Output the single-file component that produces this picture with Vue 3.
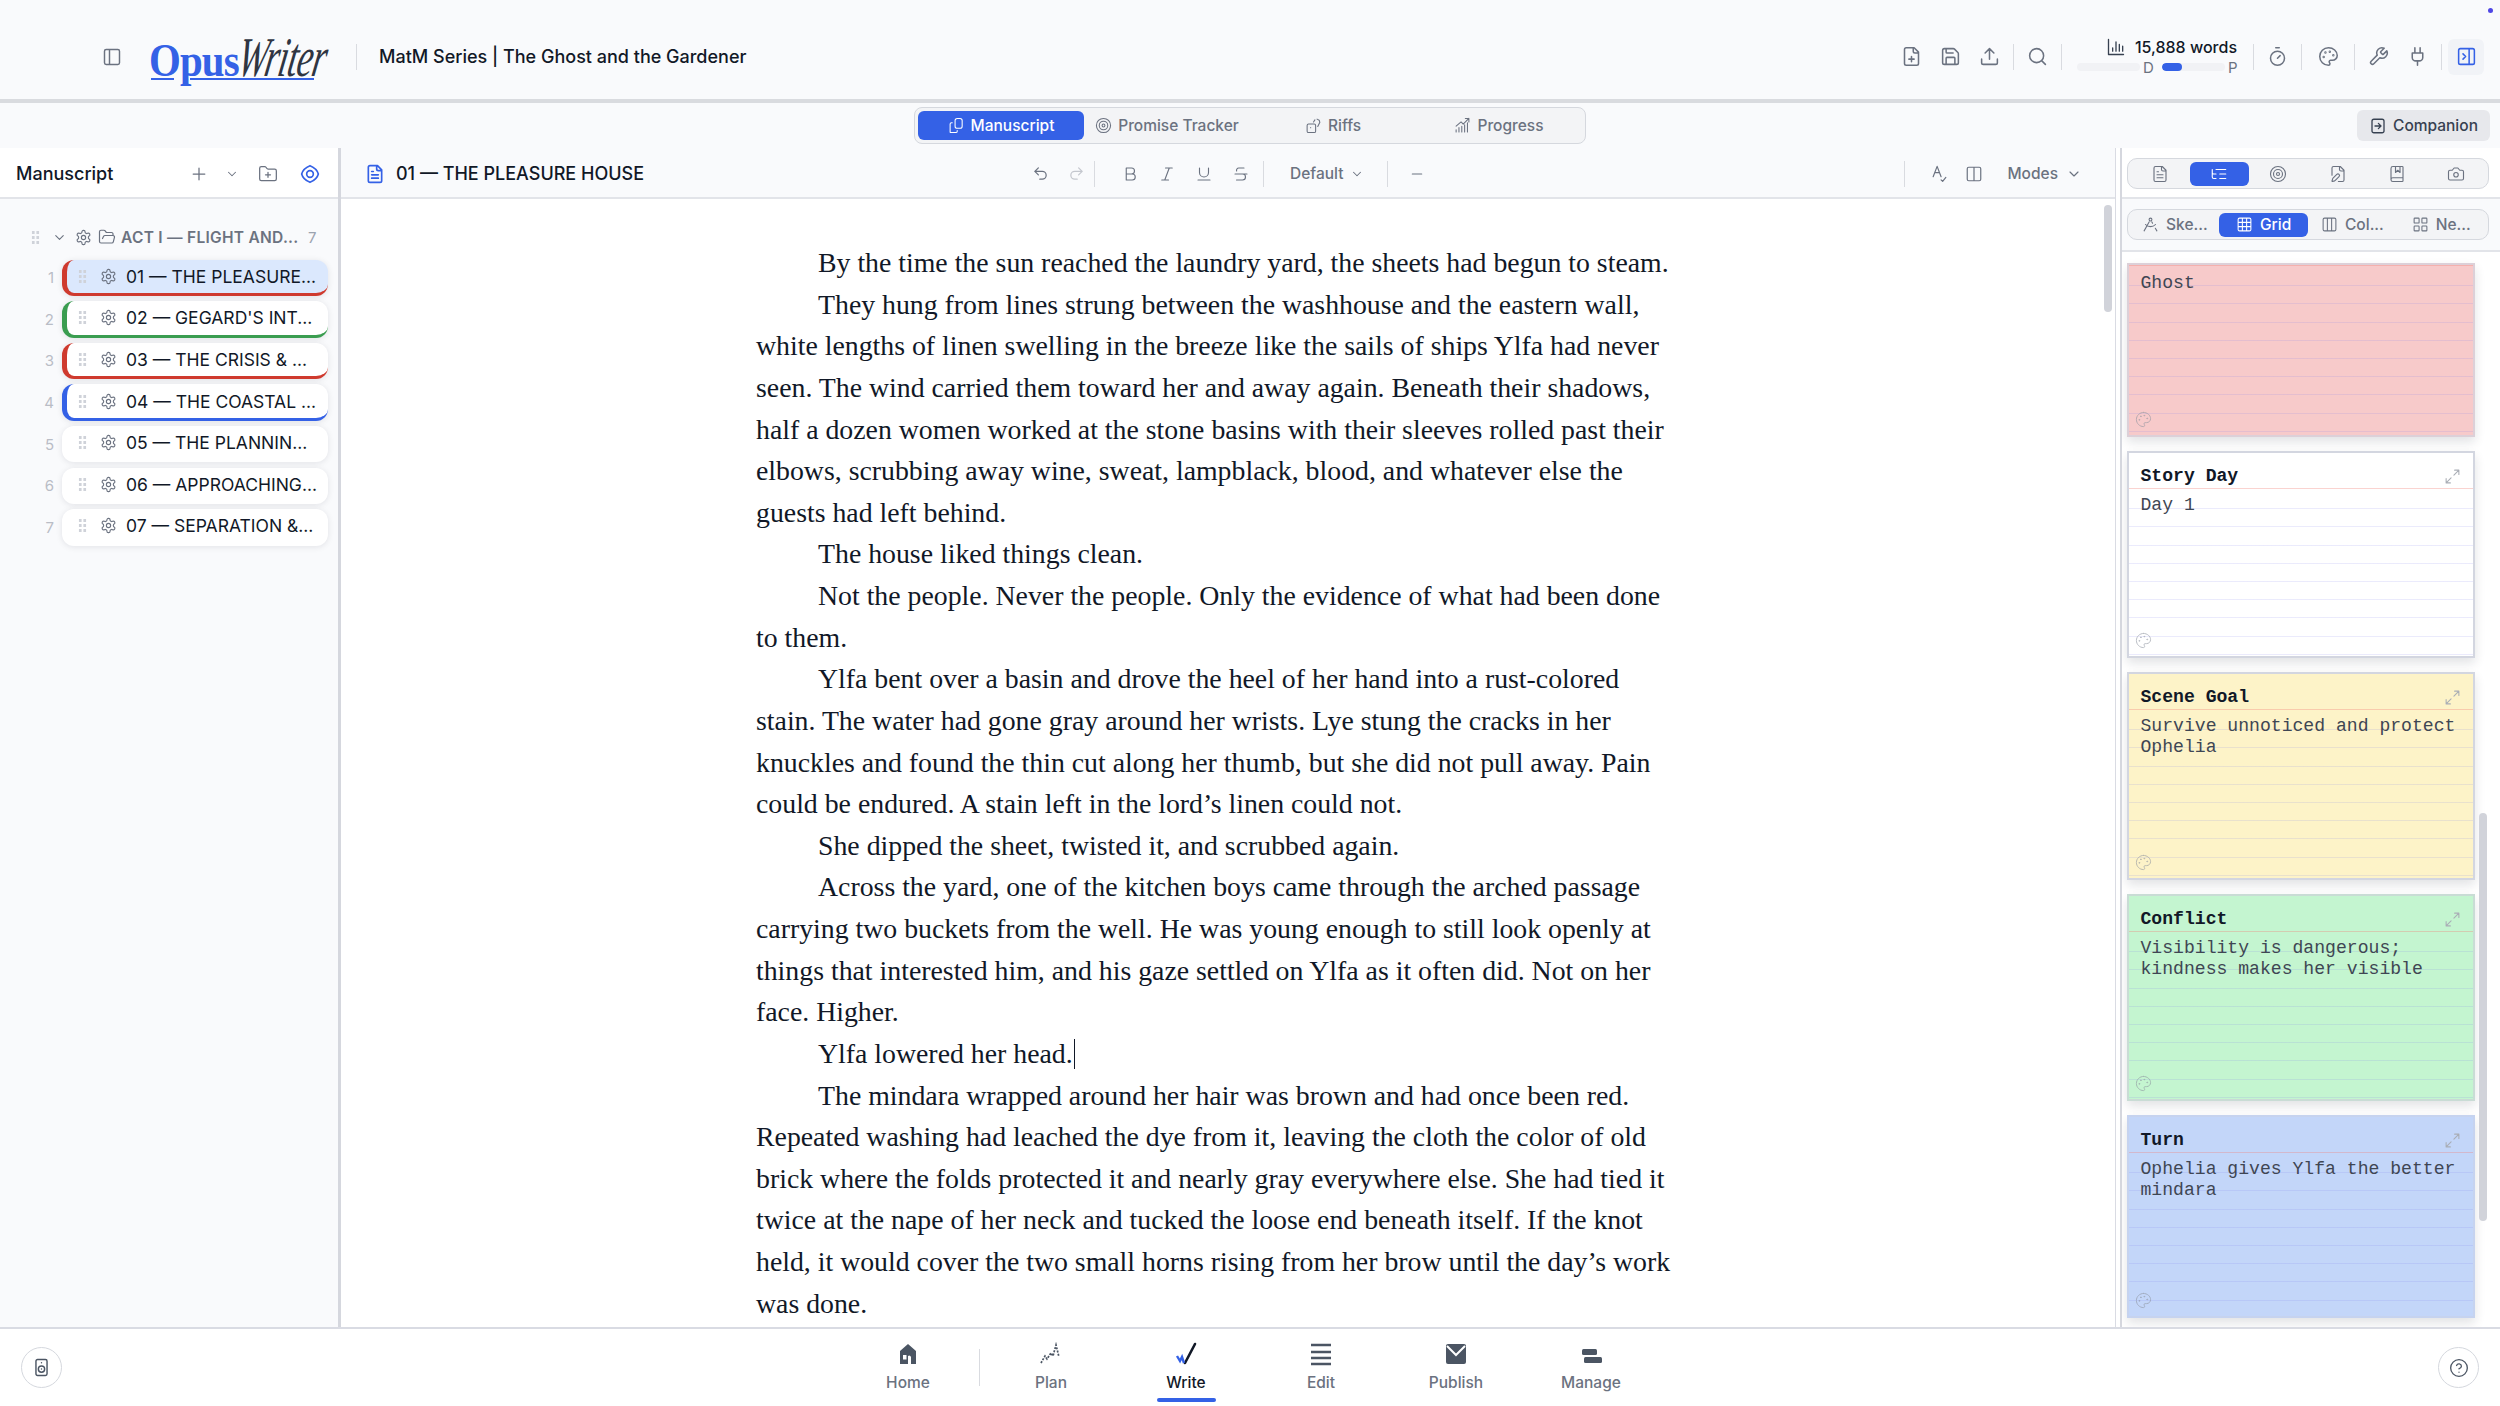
<script setup>
import { h } from "vue";

const rect = (x, y, w, ht, r) =>
  `M${x + r} ${y}h${w - 2 * r}a${r} ${r} 0 0 1 ${r} ${r}v${ht - 2 * r}a${r} ${r} 0 0 1-${r} ${r}h-${w - 2 * r}a${r} ${r} 0 0 1-${r}-${r}v-${ht - 2 * r}a${r} ${r} 0 0 1 ${r}-${r}z`;
const circle = (x, y, r) => `M${x - r} ${y}a${r} ${r} 0 1 0 ${2 * r} 0a${r} ${r} 0 1 0-${2 * r} 0z`;

const icons = {
  panelLeft: rect(3, 3, 18, 18, 2) + "M9 3v18",
  panelRight: rect(3, 3, 18, 18, 2) + "M15 3v18m-7-12 3 3-3 3",
  filePlus: "M15 2H6a2 2 0 0 0-2 2v16a2 2 0 0 0 2 2h12a2 2 0 0 0 2-2V7ZM14 2v4a2 2 0 0 0 2 2h4M9 15h6M12 18v-6",
  save: "M15.2 3a2 2 0 0 1 1.4.6l3.8 3.8a2 2 0 0 1 .6 1.4V19a2 2 0 0 1-2 2H5a2 2 0 0 1-2-2V5a2 2 0 0 1 2-2zM17 21v-7a1 1 0 0 0-1-1H8a1 1 0 0 0-1 1v7M7 3v4a1 1 0 0 0 1 1h7",
  upload: "M21 15v4a2 2 0 0 1-2 2H5a2 2 0 0 1-2-2v-4M17 8l-5-5-5 5M12 3v12",
  search: circle(11, 11, 8) + "M21 21l-4.3-4.3",
  chart: "M3 3v18h18M8 17v-4M12 17V6M16 17V9M20 17v-6",
  timer: "M10 2h4M12 14l3-3" + circle(12, 14, 8),
  palette:
    circle(13.5, 6.5, 0.5) + circle(17.5, 10.5, 0.5) + circle(8.5, 7.5, 0.5) + circle(6.5, 12.5, 0.5) +
    "M12 2C6.5 2 2 6.5 2 12s4.5 10 10 10c.926 0 1.648-.746 1.648-1.688 0-.437-.18-.835-.437-1.125-.29-.289-.438-.652-.438-1.125a1.64 1.64 0 0 1 1.668-1.668h1.996c3.051 0 5.555-2.503 5.555-5.554C21.965 6.012 17.461 2 12 2z",
  wrench: "M14.7 6.3a1 1 0 0 0 0 1.4l1.6 1.6a1 1 0 0 0 1.4 0l3.77-3.77a6 6 0 0 1-7.94 7.94l-6.91 6.91a2.12 2.12 0 0 1-3-3l6.91-6.91a6 6 0 0 1 7.94-7.94l-3.76 3.76z",
  plug: "M12 22v-5M9 8V2M15 8V2M18 8v5a4 4 0 0 1-4 4h-4a4 4 0 0 1-4-4V8Z",
  fileText: "M15 2H6a2 2 0 0 0-2 2v16a2 2 0 0 0 2 2h12a2 2 0 0 0 2-2V7ZM14 2v4a2 2 0 0 0 2 2h4M16 13H8M16 17H8M10 9H8",
  plus: "M5 12h14M12 5v14",
  chevron: "m6 9 6 6 6-6",
  folderPlus: "M12 10v6M9 13h6M20 20a2 2 0 0 0 2-2V8a2 2 0 0 0-2-2h-7.9a2 2 0 0 1-1.69-.9L9.6 3.9A2 2 0 0 0 7.93 3H4a2 2 0 0 0-2 2v13a2 2 0 0 0 2 2Z",
  eye: "M12 2c5 2 9 6 10 10-1 4-5 8-10 10-5-2-9-6-10-10 1-4 5-8 10-10z" + circle(12, 12, 4),
  undo: "M9 14 4 9l5-5M4 9h10.5a5.5 5.5 0 0 1 0 11H11",
  redo: "m15 14 5-5-5-5M20 9H9.5a5.5 5.5 0 0 0 0 11H13",
  bold: "M14 12a4 4 0 0 0 0-8H7v8M15 20a4 4 0 0 0 0-8H7v8Z",
  italic: "M19 4h-9M14 20H5M15 4 9 20",
  underline: "M6 4v6a6 6 0 0 0 12 0V4M4 20h16",
  strike: "M16 4H9a3 3 0 0 0-2.83 4M14 12a4 4 0 0 1 0 8H6M4 12h16",
  minus: "M5 12h14",
  spell: "M4 16 9 3l5 13M6 11h6M14 20l2 2 4-5",
  columns: rect(3, 3, 18, 18, 2) + "M12 3v18",
  target: circle(12, 12, 10) + circle(12, 12, 6) + circle(12, 12, 2),
  listTree: "M21 12h-8M21 6H8M21 18h-8M3 6v4c0 1.1.9 2 2 2h3M3 10v6c0 1.1.9 2 2 2h3",
  filePen:
    "M12.5 22H18a2 2 0 0 0 2-2V7l-5-5H6a2 2 0 0 0-2 2v9.5M14 2v4a2 2 0 0 0 2 2h4M13.378 15.626a1 1 0 1 0-3.004-3.004l-5.01 5.012a2 2 0 0 0-.506.854l-.837 2.87a.5.5 0 0 0 .62.62l2.87-.837a2 2 0 0 0 .854-.506z",
  book: "M10 2v8l3-3 3 3V2M4 19.5v-15A2.5 2.5 0 0 1 6.5 2H19a1 1 0 0 1 1 1v18a1 1 0 0 1-1 1H6.5a1 1 0 0 1 0-5H20",
  camera: "M14.5 4h-5L7 7H4a2 2 0 0 0-2 2v9a2 2 0 0 0 2 2h16a2 2 0 0 0 2-2V9a2 2 0 0 0-2-2h-3l-2.5-3z" + circle(12, 13, 3),
  compass: "m13 6.7 1.9 3.5M19.1 12a10 10 0 0 1-14.2 0M21 21l-2.2-3.8M3 21l8-14.3" + circle(12, 5, 2),
  grid: rect(3, 3, 18, 18, 2) + "M3 9h18M3 15h18M9 3v18M15 3v18",
  cols3: rect(3, 3, 18, 18, 2) + "M9 3v18M15 3v18",
  layout: rect(3, 3, 7, 7, 1) + rect(14, 3, 7, 7, 1) + rect(14, 14, 7, 7, 1) + rect(3, 14, 7, 7, 1),
  expand: "M15 3h6v6M21 3l-7 7M3 21l7-7M9 21H3v-6",
  gear:
    "M12.22 2h-.44a2 2 0 0 0-2 2v.18a2 2 0 0 1-1 1.73l-.43.25a2 2 0 0 1-2 0l-.15-.08a2 2 0 0 0-2.73.73l-.22.38a2 2 0 0 0 .73 2.73l.15.1a2 2 0 0 1 1 1.72v.51a2 2 0 0 1-1 1.74l-.15.09a2 2 0 0 0-.73 2.73l.22.38a2 2 0 0 0 2.73.73l.15-.08a2 2 0 0 1 2 0l.43.25a2 2 0 0 1 1 1.73V20a2 2 0 0 0 2 2h.44a2 2 0 0 0 2-2v-.18a2 2 0 0 1 1-1.73l.43-.25a2 2 0 0 1 2 0l.15.08a2 2 0 0 0 2.73-.73l.22-.39a2 2 0 0 0-.73-2.73l-.15-.08a2 2 0 0 1-1-1.74v-.5a2 2 0 0 1 1-1.74l.15-.09a2 2 0 0 0 .73-2.73l-.22-.38a2 2 0 0 0-2.73-.73l-.15.08a2 2 0 0 1-2 0l-.43-.25a2 2 0 0 1-1-1.73V4a2 2 0 0 0-2-2z" +
    circle(12, 12, 3),
  folderOpen:
    "m6 14 1.5-2.9A2 2 0 0 1 9.24 10H20a2 2 0 0 1 1.94 2.5l-1.54 6a2 2 0 0 1-1.95 1.5H4a2 2 0 0 1-2-2V5a2 2 0 0 1 2-2h3.9a2 2 0 0 1 1.69.9l.81 1.2a2 2 0 0 0 1.69.9H18a2 2 0 0 1 2 2v2",
  boxArrow: rect(4, 3, 16, 18, 2.5) + "M8 12h8m-3.5-3.5L16 12l-3.5 3.5",
  papers: "M6 8H5a2 2 0 0 0-2 2v11a1 1 0 0 0 1 1h7a2 2 0 0 0 2-2v-1" + rect(10, 2, 10, 14, 3),
  dice: rect(3, 10, 12, 12, 2) + "M8 15h.01M17 3l3 1.5 1 3-3 6M12 7l2-3",
  growth: "M3 21v-3M7 21v-6M11 21v-8M15 21v-10M19 21V8M3 13 10 7l3 3 8-8M16 2h5v5",
  speaker: rect(5, 2, 14, 20, 2) + circle(12, 14, 4) + "M12 6h.01M12 14h.01",
  help: circle(12, 12, 10) + "M9.1 9a3 3 0 0 1 5.8 1c0 2-3 3-3 3M12 17h.01",
};

const Icon = (props) =>
  h(
    "svg",
    {
      viewBox: "0 0 24 24",
      width: props.size || 21,
      height: props.size || 21,
      fill: "none",
      stroke: "currentColor",
      "stroke-width": props.sw || 1.75,
      "stroke-linecap": "round",
      "stroke-linejoin": "round",
    },
    [h("path", { d: icons[props.name] })]
  );

const chapters = [
  { n: 1, title: "01 — THE PLEASURE...", color: "#cf3a2e", active: true },
  { n: 2, title: "02 — GEGARD'S INT...", color: "#3a9d50" },
  { n: 3, title: "03 — THE CRISIS & ...", color: "#cf3a2e" },
  { n: 4, title: "04 — THE COASTAL ...", color: "#3461e6" },
  { n: 5, title: "05 — THE PLANNIN..." },
  { n: 6, title: "06 — APPROACHING..." },
  { n: 7, title: "07 — SEPARATION &..." },
];

const tabs = [
  { label: "Manuscript", icon: "papers", active: true },
  { label: "Promise Tracker", icon: "target" },
  { label: "Riffs", icon: "dice" },
  { label: "Progress", icon: "growth" },
];

const panelIcons = ["fileText", "listTree", "target", "filePen", "book", "camera"];

const views = [
  { label: "Ske...", icon: "compass" },
  { label: "Grid", icon: "grid", active: true },
  { label: "Col...", icon: "cols3" },
  { label: "Ne...", icon: "layout" },
];

const cards = [
  { body: "Ghost", cls: "red", height: 174 },
  { title: "Story Day", body: "Day 1", cls: "white", height: 207 },
  { title: "Scene Goal", body: "Survive unnoticed and protect Ophelia", cls: "yellow", height: 208 },
  { title: "Conflict", body: "Visibility is dangerous; kindness makes her visible", cls: "green", height: 207 },
  { title: "Turn", body: "Ophelia gives Ylfa the better mindara", cls: "blue", height: 203 },
];

const paragraphs = [
  "By the time the sun reached the laundry yard, the sheets had begun to steam.",
  "They hung from lines strung between the washhouse and the eastern wall, white lengths of linen swelling in the breeze like the sails of ships Ylfa had never seen. The wind carried them toward her and away again. Beneath their shadows, half a dozen women worked at the stone basins with their sleeves rolled past their elbows, scrubbing away wine, sweat, lampblack, blood, and whatever else the guests had left behind.",
  "The house liked things clean.",
  "Not the people. Never the people. Only the evidence of what had been done to them.",
  "Ylfa bent over a basin and drove the heel of her hand into a rust-colored stain. The water had gone gray around her wrists. Lye stung the cracks in her knuckles and found the thin cut along her thumb, but she did not pull away. Pain could be endured. A stain left in the lord’s linen could not.",
  "She dipped the sheet, twisted it, and scrubbed again.",
  "Across the yard, one of the kitchen boys came through the arched passage carrying two buckets from the well. He was young enough to still look openly at things that interested him, and his gaze settled on Ylfa as it often did. Not on her face. Higher.",
];
const lastParagraph =
  "The mindara wrapped around her hair was brown and had once been red. Repeated washing had leached the dye from it, leaving the cloth the color of old brick where the folds protected it and nearly gray everywhere else. She had tied it twice at the nape of her neck and tucked the loose end beneath itself. If the knot held, it would cover the two small horns rising from her brow until the day’s work was done.";

const navItems = ["Plan", "Write", "Edit", "Publish", "Manage"];
</script>

<template>
  <div class="app">
    <span class="status-dot"></span>

    <header class="topbar">
      <div class="top-left">
        <button class="icon-btn side-toggle"><Icon name="panelLeft" :size="20" /></button>
        <div class="logo">
          <span class="logo-opus">Opus</span><span class="logo-writer">Writer</span>
          <span class="logo-line"></span>
        </div>
        <span class="sep logo-sep"></span>
        <span class="doc-title">MatM Series | The Ghost and the Gardener</span>
      </div>
      <div class="top-right">
        <button class="icon-btn"><Icon name="filePlus" /></button>
        <button class="icon-btn"><Icon name="save" /></button>
        <button class="icon-btn"><Icon name="upload" /></button>
        <span class="sep"></span>
        <button class="icon-btn"><Icon name="search" /></button>
        <span class="sep"></span>
        <div class="stats">
          <div class="stats-top"><Icon name="chart" :size="20" :sw="1.6" class="dark" /><span>15,888 words</span></div>
          <div class="stats-bars">
            <span class="track"></span><span class="letter">D</span>
            <span class="track"><i class="fill"></i></span><span class="letter">P</span>
          </div>
        </div>
        <span class="sep after-stats"></span>
        <button class="icon-btn"><Icon name="timer" /></button>
        <span class="sep"></span>
        <button class="icon-btn wide"><Icon name="palette" /></button>
        <span class="sep"></span>
        <button class="icon-btn"><Icon name="wrench" /></button>
        <button class="icon-btn"><Icon name="plug" /></button>
        <span class="sep"></span>
        <button class="panel-btn"><Icon name="panelRight" :size="21" /></button>
      </div>
    </header>

    <div class="subbar">
      <div></div>
      <div class="tabs">
        <div v-for="t in tabs" :key="t.label" class="tab" :class="{ on: t.active }">
          <Icon :name="t.icon" :size="17" :sw="1.5" /><span>{{ t.label }}</span>
        </div>
      </div>
      <div class="subbar-right">
        <button class="companion"><Icon name="boxArrow" :size="18" /><span>Companion</span></button>
      </div>
    </div>

    <main class="main">
      <aside class="left">
        <div class="left-head">
          <span class="left-title">Manuscript</span>
          <div class="left-tools">
            <Icon name="plus" :size="20" :sw="1.5" class="t-plus" />
            <Icon name="chevron" :size="14" class="t-chev" />
            <Icon name="folderPlus" :size="20" :sw="1.5" class="t-folder" />
            <Icon name="eye" :size="20" :sw="2" class="t-eye" />
          </div>
        </div>
        <div class="tree">
          <div class="group">
            <span class="dots"></span>
            <Icon name="chevron" :size="15" class="chev" />
            <Icon name="gear" :size="17" :sw="1.6" />
            <Icon name="folderOpen" :size="18" :sw="1.6" class="folder" />
            <span class="group-name">ACT I — FLIGHT AND...</span>
            <span class="group-count">7</span>
          </div>
          <div v-for="c in chapters" :key="c.n" class="row">
            <span class="row-num">{{ c.n }}</span>
            <div class="item" :class="{ on: c.active }" :style="c.color ? { borderColor: c.color } : null">
              <span class="dots"></span>
              <Icon name="gear" :size="17" :sw="1.6" class="gear" />
              <span class="item-title">{{ c.title }}</span>
            </div>
          </div>
        </div>
      </aside>

      <section class="editor">
        <div class="editor-head">
          <div class="editor-title">
            <Icon name="fileText" :size="20" :sw="2" class="blue" />
            <span>01 — THE PLEASURE HOUSE</span>
          </div>
          <div class="tools">
            <Icon name="undo" :size="17" class="tool" />
            <Icon name="redo" :size="17" class="tool faint" />
            <span class="sep first-sep"></span>
            <Icon name="bold" :size="18" :sw="1.5" class="tool" />
            <Icon name="italic" :size="18" :sw="1.5" class="tool" />
            <Icon name="underline" :size="18" :sw="1.5" class="tool" />
            <Icon name="strike" :size="18" :sw="1.5" class="tool" />
            <span class="sep"></span>
            <span class="default">Default</span>
            <Icon name="chevron" :size="14" class="default-chev" />
            <span class="sep"></span>
            <Icon name="minus" :size="16" class="tool minus" />
          </div>
          <div class="tools-right">
            <span class="sep"></span>
            <Icon name="spell" :size="19" :sw="1.5" class="spell" />
            <Icon name="columns" :size="18" :sw="1.6" class="cols" />
            <span class="modes">Modes</span>
            <Icon name="chevron" :size="16" class="modes-chev" />
          </div>
        </div>
        <div class="editor-body">
          <article class="page">
            <p v-for="(p, i) in paragraphs" :key="i">{{ p }}</p>
            <p>Ylfa lowered her head.<span class="caret"></span></p>
            <p>{{ lastParagraph }}</p>
          </article>
          <span class="editor-scroll"></span>
        </div>
      </section>

      <aside class="right">
        <div class="right-inner">
          <div class="right-head">
            <div class="seg">
              <div v-for="(name, i) in panelIcons" :key="name" class="seg-cell" :class="{ on: i === 1 }">
                <Icon :name="name" :size="18" :sw="1.5" />
              </div>
            </div>
          </div>
          <div class="view-row">
            <div class="views">
              <div v-for="v in views" :key="v.label" class="view" :class="{ on: v.active }">
                <Icon :name="v.icon" :size="17" :sw="1.5" /><span>{{ v.label }}</span>
              </div>
            </div>
          </div>
          <div class="cards">
            <div
              v-for="c in cards"
              :key="c.body"
              class="card"
              :class="[c.cls, { plain: !c.title }]"
              :style="{ height: c.height + 'px' }"
            >
              <div v-if="c.title" class="card-head">
                <span>{{ c.title }}</span>
                <Icon name="expand" :size="17" :sw="1.5" class="expand" />
              </div>
              <div class="card-body">{{ c.body }}</div>
              <Icon name="palette" :size="17" :sw="1.4" class="card-palette" />
            </div>
            <span class="cards-scroll"></span>
          </div>
        </div>
      </aside>
    </main>

    <footer class="bottom">
      <div class="bottom-side">
        <button class="round"><Icon name="speaker" :size="19" :sw="1.8" /></button>
      </div>
      <nav class="nav">
        <div class="nav-item">
          <svg width="24" height="24" viewBox="0 0 24 24" class="nav-icon">
            <path d="M12 2 20 9v13h-5v-7a2 2 0 0 0-3-1v8H4V9z" fill="#4b5563" />
            <path d="M7 13h3.5v4.5H7z" fill="#fff" />
          </svg>
          <span>Home</span>
        </div>
        <span class="nav-sep"></span>
        <div v-for="n in navItems" :key="n" class="nav-item" :class="{ on: n === 'Write' }">
          <svg v-if="n === 'Plan'" width="24" height="24" viewBox="0 0 24 24" class="nav-icon">
            <path d="M2 21 6 14 8 17 12 11 14 14 17 3 20 15" fill="none" stroke="#4b5563" stroke-width="1.7" stroke-dasharray="2 1.3" />
          </svg>
          <svg v-else-if="n === 'Write'" width="24" height="24" viewBox="0 0 24 24" class="nav-icon">
            <path d="M11 21 21 2" fill="none" stroke="#111827" stroke-width="2.6" stroke-linecap="round" />
            <path d="M3 14 6 19 8 15 10 21" fill="none" stroke="#3461e6" stroke-width="2.4" />
          </svg>
          <svg v-else-if="n === 'Edit'" width="24" height="24" viewBox="0 0 24 24" class="nav-icon">
            <path d="M2 3h20M2 10h20M2 16h20M2 22h20" fill="none" stroke="#4b5563" stroke-width="2.6" />
          </svg>
          <svg v-else-if="n === 'Publish'" width="24" height="24" viewBox="0 0 24 24" class="nav-icon">
            <rect x="2" y="2" width="20" height="20" rx="2" fill="#4b5563" />
            <path d="M3 4 12 13 21 4" fill="none" stroke="#fff" stroke-width="2" />
          </svg>
          <svg v-else width="24" height="24" viewBox="0 0 24 24" class="nav-icon">
            <rect x="3" y="7" width="15" height="6" rx="1.5" fill="#4b5563" />
            <rect x="5" y="15" width="18" height="6" rx="1.5" fill="#4b5563" />
          </svg>
          <span>{{ n }}</span>
        </div>
      </nav>
      <div class="bottom-side end">
        <button class="round"><Icon name="help" :size="20" :sw="1.6" /></button>
      </div>
    </footer>
  </div>
</template>

<style>
html,
body {
  margin: 0;
  background: #fff;
}
</style>

<style scoped>
.app {
  position: relative;
  width: 2500px;
  height: 1406px;
  display: flex;
  flex-direction: column;
  overflow: hidden;
  font-family: Inter, "Liberation Sans", sans-serif;
  color: #111827;
  background: #fff;
}

button {
  border: none;
  background: none;
  padding: 0;
  font: inherit;
  color: inherit;
}

.status-dot {
  position: absolute;
  top: 8px;
  left: 2488px;
  width: 5px;
  height: 5px;
  border-radius: 50%;
  background: #4f46e5;
}

.sep {
  flex: none;
  width: 1px;
  height: 26px;
  margin: 0 4px;
  background: #d9dbe0;
}

.icon-btn {
  flex: none;
  width: 39px;
  height: 36px;
  display: flex;
  align-items: center;
  justify-content: center;
  color: #6b7280;
}

.icon-btn.wide {
  width: 44px;
}

/* top bar */
.topbar {
  flex: none;
  height: 99px;
  box-sizing: content-box;
  border-bottom: 4px solid #d9dbdf;
  background: #f9fafc;
  display: flex;
  justify-content: space-between;
  align-items: center;
  padding: 0 16px 0 0;
}

.top-left {
  display: flex;
  align-items: center;
  padding-top: 14px;
}

.top-right {
  display: flex;
  align-items: center;
  padding-top: 14px;
}

.side-toggle {
  margin-left: 92px;
}

.logo {
  position: relative;
  display: flex;
  align-items: baseline;
  margin-left: 18px;
  width: 181px;
  height: 44px;
  line-height: 44px;
}

.logo-opus {
  font-family: "Liberation Serif", serif;
  font-weight: 700;
  font-size: 47px;
  color: #3461e6;
  display: inline-block;
  transform: scaleX(0.87);
  transform-origin: left;
  letter-spacing: -1px;
}

.logo-writer {
  font-family: "Liberation Serif", serif;
  font-style: italic;
  font-size: 56px;
  color: #2f3542;
  display: inline-block;
  margin-left: -17px;
  transform: skewX(-10deg) scaleX(0.64);
  transform-origin: left bottom;
  letter-spacing: -1px;
}

.logo-line {
  position: absolute;
  left: 2px;
  top: 43px;
  width: 163px;
  height: 2px;
  background: linear-gradient(to right, #3461e6 23px, transparent 23px, transparent 39px, #3461e6 39px);
}

.logo-sep {
  margin: 0 22px 0 26px;
}

.doc-title {
  font-size: 18px;
  font-weight: 500;
}

.stats {
  width: 160px;
  margin-left: 11px;
  margin-right: 12px;
}

.stats-top {
  display: flex;
  align-items: center;
  justify-content: flex-end;
  gap: 9px;
  font-size: 16px;
  font-weight: 500;
}

.stats-bars {
  display: flex;
  align-items: center;
  margin-top: 1px;
  font-size: 15px;
  color: #6b7280;
}

.track {
  flex: none;
  width: 63px;
  height: 8px;
  border-radius: 4px;
  background: #f1f2f5;
  overflow: hidden;
}

.fill {
  display: block;
  width: 20px;
  height: 100%;
  border-radius: 4px;
  background: #3461e6;
}

.letter {
  flex: none;
  width: 22px;
  box-sizing: border-box;
  padding-left: 3px;
}

.dark {
  color: #374151;
}

.panel-btn {
  width: 36px;
  height: 36px;
  margin-left: 2px;
  border-radius: 6px;
  background: #f1f3f7;
  color: #3461e6;
  display: flex;
  align-items: center;
  justify-content: center;
}

/* tabs */
.subbar {
  flex: none;
  height: 45px;
  background: #f9fafc;
  display: grid;
  grid-template-columns: 1fr auto 1fr;
  align-items: center;
}

.tabs {
  display: grid;
  grid-template-columns: repeat(4, 166px);
  padding: 3px;
  height: 29px;
  border: 1px solid #d5d8de;
  border-radius: 8px;
  background: #f3f4f6;
  box-sizing: content-box;
}

.tab {
  display: flex;
  align-items: center;
  justify-content: center;
  gap: 6px;
  font-size: 15.5px;
  font-weight: 500;
  color: #6b7280;
  border-radius: 6px;
}

.tab.on {
  background: #3461e6;
  color: #fff;
}

.subbar-right {
  display: flex;
  justify-content: flex-end;
  padding-right: 10px;
}

.companion {
  display: flex;
  align-items: center;
  gap: 6px;
  width: 133px;
  height: 31px;
  justify-content: center;
  border-radius: 6px;
  background: #e7e8ec;
  color: #374151;
  font-size: 15.5px;
  font-weight: 500;
}

/* main */
.main {
  flex: 1;
  min-height: 0;
  display: flex;
  border-bottom: 2px solid #d9dbe3;
}

.left {
  flex: none;
  width: 341px;
  display: flex;
  flex-direction: column;
  border-right: 3px solid #d5d7de;
  box-sizing: border-box;
}

.left-head {
  flex: none;
  height: 51px;
  background: #fff;
  border-bottom: 2px solid #e2e4e9;
  box-sizing: border-box;
  display: flex;
  align-items: center;
  justify-content: space-between;
  padding: 2px 0 0 16px;
}

.left-title {
  font-size: 18px;
  font-weight: 500;
}

.left-tools {
  position: relative;
  display: flex;
  align-items: center;
  color: #6b7280;
  padding-right: 18px;
}

.t-chev {
  margin: 0 0 0 16px;
}

.t-folder {
  margin-left: 19px;
}

.t-eye {
  margin-left: 22px;
  color: #3461e6;
}

.tree {
  flex: 1;
  background: #f9fafc;
  padding-top: 20px;
}

.dots {
  flex: none;
  width: 9px;
  height: 15px;
  background: radial-gradient(circle, #cfd2d9 1.5px, transparent 1.8px) 0 0 / 4.5px 5px;
}

.group {
  display: flex;
  align-items: center;
  height: 36px;
  padding-left: 31px;
  margin-bottom: 2px;
  color: #6b7280;
}

.chev {
  margin: 0 8px 0 12px;
}

.folder {
  margin-left: 6px;
}

.group-name {
  margin-left: 5px;
  width: 187px;
  font-size: 15.5px;
  font-weight: 600;
  letter-spacing: 0.28px;
  white-space: nowrap;
}

.group-count {
  font-size: 15px;
  color: #9ca3af;
}

.row {
  display: flex;
  align-items: center;
  height: 41.6px;
}

.row-num {
  width: 54px;
  flex: none;
  text-align: right;
  font-size: 15px;
  color: #b9bdc6;
}

.item {
  margin-left: 8px;
  width: 266px;
  height: 36.5px;
  box-sizing: border-box;
  border: 0 solid transparent;
  border-left-width: 5px;
  border-bottom-width: 3px;
  border-radius: 12px;
  background: #fff;
  box-shadow: 0 1px 6px rgba(17, 24, 39, 0.1);
  display: flex;
  align-items: center;
  padding-left: 11px;
}

.item.on {
  background: #dbe8fd;
}

.gear {
  margin-left: 13px;
  color: #6b7280;
}

.item-title {
  margin-left: 9px;
  font-size: 17.5px;
  white-space: nowrap;
}

/* editor */
.editor {
  flex: 1;
  min-width: 0;
  display: flex;
  flex-direction: column;
}

.editor-head {
  flex: none;
  height: 51px;
  box-sizing: border-box;
  padding-top: 2px;
  background: #f9fafc;
  border-bottom: 2px solid #e2e4e9;
  display: flex;
  align-items: center;
}

.editor-title {
  width: 681px;
  flex: none;
  display: flex;
  align-items: center;
  gap: 11px;
  padding-left: 24px;
  box-sizing: border-box;
  font-size: 18px;
  font-weight: 500;
}

.blue {
  color: #3461e6;
}

.tools {
  display: flex;
  align-items: center;
  color: #6b7280;
}

.tool {
  margin: 0 9.5px;
}

.first-sep {
  margin: 0 16px 0 0;
}

.faint {
  color: #c4c7ce;
}

.default {
  margin-left: 22px;
  font-size: 15.5px;
  font-weight: 500;
}

.default-chev {
  margin: 0 19px 0 7px;
}

.minus {
  margin-left: 17px;
}

.tools-right {
  margin-left: auto;
  padding-right: 33px;
  display: flex;
  align-items: center;
  color: #6b7280;
}

.spell {
  margin-left: 21px;
}

.cols {
  margin-left: 16px;
}

.modes {
  margin-left: 24px;
  font-size: 15.5px;
  font-weight: 500;
}

.modes-chev {
  margin-left: 8px;
}

.editor-body {
  flex: 1;
  min-height: 0;
  position: relative;
  overflow: hidden;
  background: #fff;
  padding-left: 415px;
}

.page {
  width: 916px;
  padding-top: 43px;
  font-family: "Liberation Serif", serif;
  font-size: 27.8px;
  line-height: 41.62px;
  color: #111827;
}

.page p {
  margin: 0;
  text-indent: 62px;
}

.caret {
  display: inline-block;
  width: 1.5px;
  height: 30px;
  margin-left: 1px;
  vertical-align: -6px;
  background: #111827;
}

.editor-scroll {
  position: absolute;
  left: 1763px;
  top: 6px;
  width: 8px;
  height: 107px;
  border-radius: 4px;
  background: #d1d3da;
}

/* right panel */
.right {
  flex: none;
  width: 385px;
  box-sizing: border-box;
  border-left: 1px solid #d9dbe3;
  padding-left: 4px;
}

.right-inner {
  height: 100%;
  border-left: 2px solid #d5d7de;
  display: flex;
  flex-direction: column;
  box-sizing: border-box;
}

.right-head {
  flex: none;
  height: 51px;
  box-sizing: border-box;
  background: #fff;
  border-bottom: 2px solid #e2e4e9;
  padding: 10px 11px 0 5px;
}

.seg,
.views {
  height: 31px;
  box-sizing: border-box;
  border: 1.5px solid #d5d8de;
  border-radius: 10px;
  background: #f3f4f6;
  padding: 2.5px;
  display: grid;
  align-items: stretch;
}

.seg {
  grid-template-columns: repeat(6, 1fr);
}

.views {
  grid-template-columns: repeat(4, 1fr);
}

.seg-cell,
.view {
  display: flex;
  align-items: center;
  justify-content: center;
  gap: 7px;
  border-radius: 6px;
  color: #6b7280;
  font-size: 15.5px;
  font-weight: 500;
}

.seg-cell.on,
.view.on {
  background: #3461e6;
  color: #fff;
}

.view-row {
  flex: none;
  height: 53px;
  box-sizing: border-box;
  background: #f9fafc;
  border-bottom: 2px solid #e2e4e9;
  padding: 10px 11px 0 5px;
}

.cards {
  flex: 1;
  min-height: 0;
  position: relative;
  overflow: hidden;
  padding: 11px 0 0 5px;
  display: flex;
  flex-direction: column;
  gap: 14px;
}

.cards-scroll {
  position: absolute;
  left: 357px;
  top: 561px;
  width: 8px;
  height: 408px;
  border-radius: 4px;
  background: #d1d3da;
}

.card {
  position: relative;
  flex: none;
  width: 348px;
  box-sizing: border-box;
  border: 2px solid #d3d6e0;
  box-shadow: 0 5px 10px rgba(17, 24, 39, 0.12);
  font-family: "Liberation Mono", monospace;
  font-size: 18.1px;
  line-height: 21px;
  --rule: rgba(120, 120, 235, 0.15);
  display: flex;
  flex-direction: column;
}

.card.red {
  background: #f7caca;
  border-color: #dcd0d8;
}

.card.white {
  background: #fff;
}

.card.yellow {
  background: #fdf3c8;
}

.card.green {
  background: #c4f5d0;
  border-color: #c9dcd5;
}

.card.blue {
  background: #c3d6f9;
  border-color: #c6d3ef;
}

.card-head {
  flex: none;
  height: 35px;
  box-sizing: content-box;
  border-bottom: 1.5px solid rgba(240, 130, 120, 0.35);
  display: flex;
  align-items: flex-end;
  justify-content: space-between;
  padding: 0 12px 0 11.5px;
  font-weight: 700;
  color: #111827;
}

.card-head span {
  padding-bottom: 1px;
}

.expand {
  color: #a9adb5;
  margin-bottom: 3px;
}

.card-body {
  flex: 1;
  padding: 6px 10px 0 11.5px;
  color: #3f4653;
  background: repeating-linear-gradient(to bottom, transparent 0, transparent 17.2px, var(--rule) 17.2px, var(--rule) 18.2px) 0 2px;
}

.plain .card-body {
  padding-top: 7px;
  border-top: 1.5px solid rgba(240, 130, 120, 0.35);
}

.card-palette {
  position: absolute;
  left: 6px;
  bottom: 7px;
  color: #8d939e;
  opacity: 0.6;
}

/* bottom */
.bottom {
  flex: none;
  height: 77px;
  background: #fff;
  display: grid;
  grid-template-columns: 1fr auto 1fr;
  align-items: center;
}

.bottom-side {
  padding: 0 21px;
  display: flex;
}

.bottom-side.end {
  justify-content: flex-end;
}

.round {
  width: 41px;
  height: 41px;
  border: 1.5px solid #d5d8de;
  border-radius: 50%;
  box-sizing: border-box;
  color: #4b5563;
  display: flex;
  align-items: center;
  justify-content: center;
}

.nav {
  display: flex;
  align-items: center;
  margin-left: -1px;
}

.nav-sep {
  width: 1px;
  height: 37px;
  margin: 0 3.5px;
  background: #d9dbe0;
}

.nav-item {
  position: relative;
  width: 135px;
  display: flex;
  flex-direction: column;
  align-items: center;
  gap: 7px;
  font-size: 15.5px;
  font-weight: 500;
  color: #6b7280;
  height: 62px;
  padding-top: 5px;
  box-sizing: border-box;
}

.nav-item.on {
  color: #111827;
}

.nav-item.on::after {
  content: "";
  position: absolute;
  left: 38px;
  right: 38px;
  bottom: -3px;
  height: 4px;
  border-radius: 2px;
  background: #3461e6;
}
</style>
